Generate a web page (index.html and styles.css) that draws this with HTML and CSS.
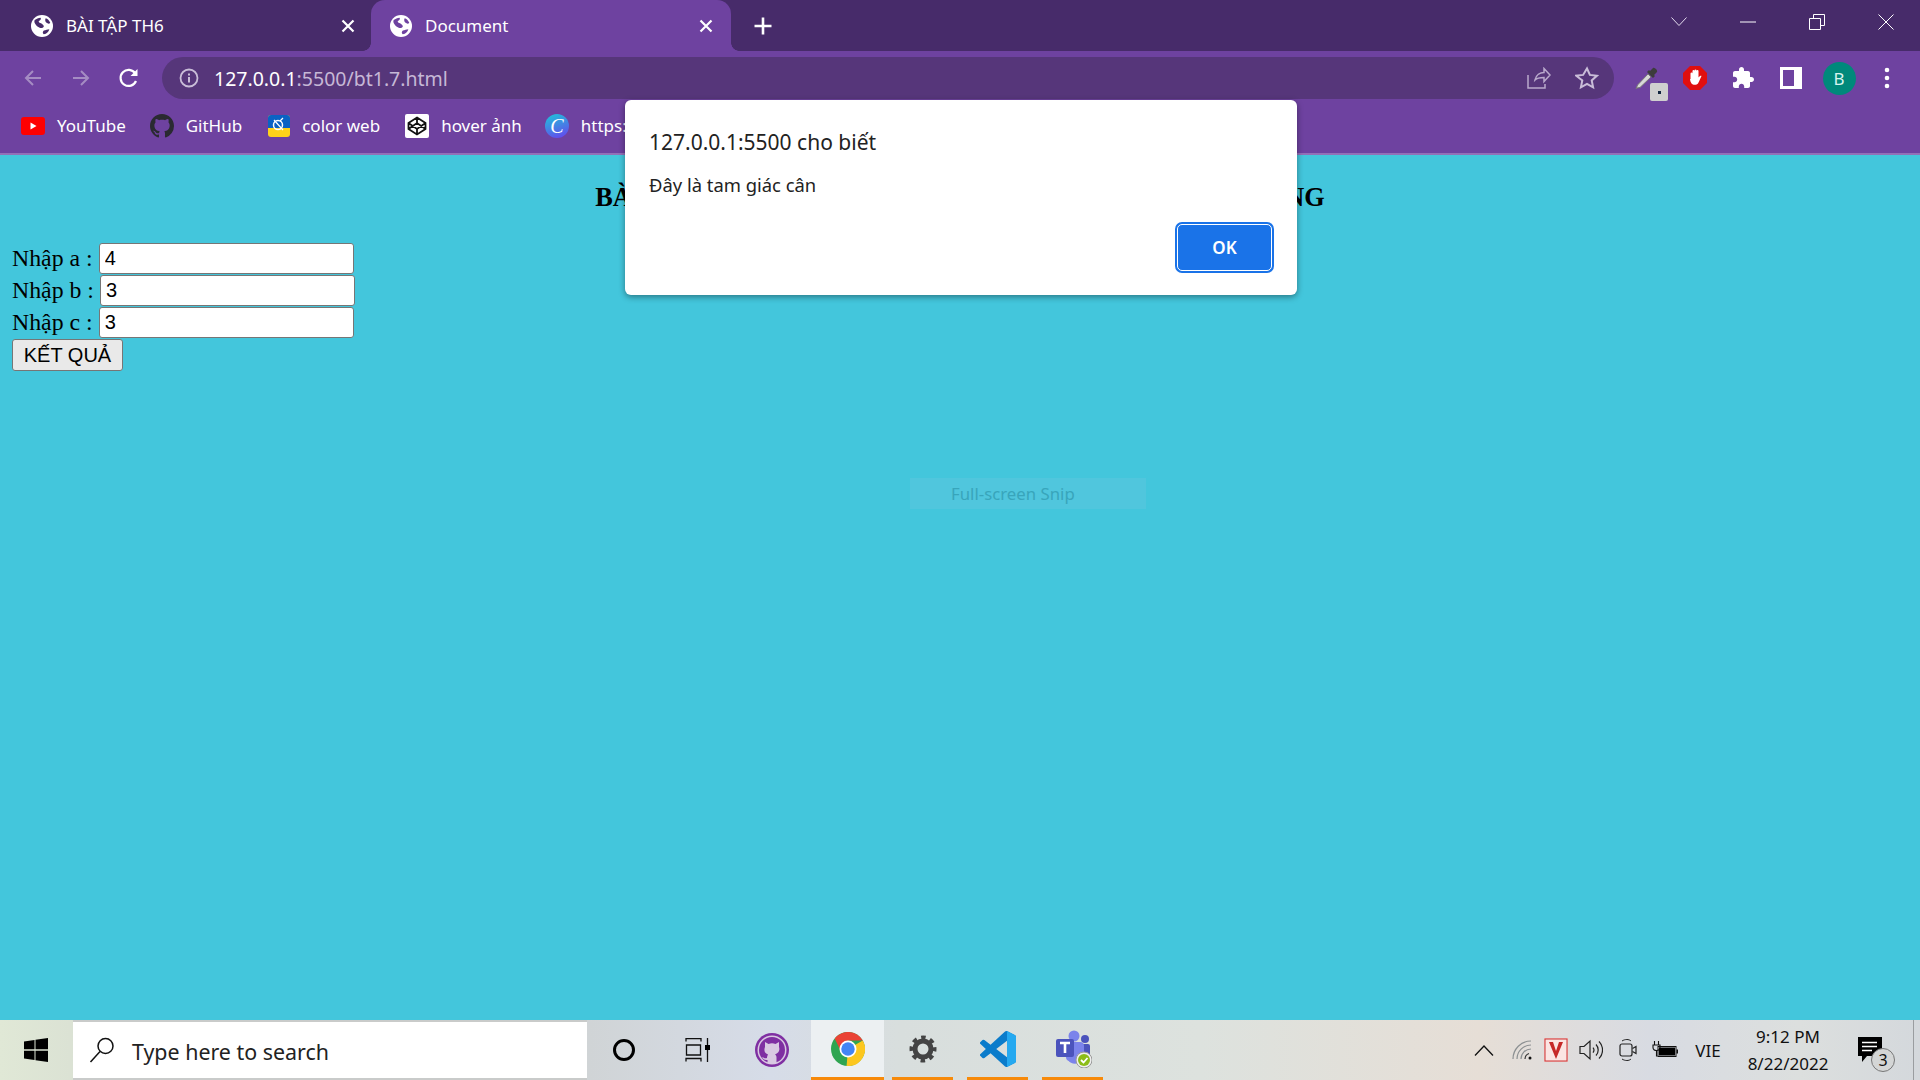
FILE: index.html
```html
<!DOCTYPE html>
<html lang="vi">
<head>
  <meta charset="UTF-8" />
  <meta name="viewport" content="width=device-width, initial-scale=1.0"/>
  <title>Document</title>
  <link rel="stylesheet" href="styles.css">
</head>
<body>
  <div class="tabstrip">
    <div class="tab">
      <svg class="globe" viewBox="0 0 24 24"><circle cx="12" cy="12" r="12" fill="#fff"/><path d="M4 5.500c2-1 4-2.500 6.500-2.500 1 1.500-.5 3-2 3.500-.5 1.500 1 2 2.500 2.500 1.500 1 3 2 3 3.500-1 2-3 2-4.500 1.500-2-1-4-2.500-5-4.500-1-1.500-1-2.500-.5-4zM16 3.500c2 .5 4 2.500 5 5-1 1.500-3 1-4 0-1.500-1-2-3.500-1-5zM14 17c2-.5 4-1.500 6-1.500-.5 2.500-3 5-6 5.500-1.500-.5-1.500-3 0-4z" fill="#472b6a"/></svg>
      <span class="tab-title">BÀI TẬP TH6</span>
      <svg class="tab-close" viewBox="0 0 24 24"><path d="M6.500 6.500l11 11M17.500 6.500l-11 11" stroke="#fff" stroke-width="2.200"/></svg>
    </div>
    <div class="tab active">
      <svg class="globe" viewBox="0 0 24 24"><circle cx="12" cy="12" r="12" fill="#fff"/><path d="M4 5.500c2-1 4-2.500 6.500-2.500 1 1.500-.5 3-2 3.500-.5 1.500 1 2 2.500 2.500 1.500 1 3 2 3 3.500-1 2-3 2-4.500 1.500-2-1-4-2.500-5-4.500-1-1.500-1-2.500-.5-4zM16 3.500c2 .5 4 2.500 5 5-1 1.500-3 1-4 0-1.500-1-2-3.500-1-5zM14 17c2-.5 4-1.500 6-1.500-.5 2.500-3 5-6 5.500-1.500-.5-1.500-3 0-4z" fill="#6e42a0"/></svg>
      <span class="tab-title">Document</span>
      <svg class="tab-close" viewBox="0 0 24 24"><path d="M6.500 6.500l11 11M17.500 6.500l-11 11" stroke="#fff" stroke-width="2.200"/></svg>
    </div>
    <svg class="new-tab" viewBox="0 0 24 24"><path d="M12 3.500v17M3.500 12h17" stroke="#fff" stroke-width="2.600"/></svg>
    <div class="window-btns">
      <span class="window-btn"><svg width="16" height="10" viewBox="0 0 16 10"><path d="M.5 .5l7.500 8 7.500-8" fill="none" stroke="#e4dcee"/></svg></span>
      <span class="window-btn"><svg width="16" height="2" viewBox="0 0 16 2"><path d="M0 1h16" stroke="#fff"/></svg></span>
      <span class="window-btn"><svg width="16" height="16" viewBox="0 0 16 16"><path d="M.5 4.500h11v11h-11zM4.500 4.500v-4h11v11h-4" fill="none" stroke="#fff"/></svg></span>
      <span class="window-btn"><svg width="16" height="16" viewBox="0 0 16 16"><path d="M.5 .5l15 15M15.500 .5l-15 15" stroke="#fff"/></svg></span>
    </div>
  </div>

  <div class="toolbar">
    <div class="nav-btns">
      <span class="tool-btn"><svg width="20" height="20" viewBox="0 0 20 20"><path d="M18 10H3M10 3l-7 7 7 7" fill="none" stroke="#a58cc3" stroke-width="2"/></svg></span>
      <span class="tool-btn"><svg width="20" height="20" viewBox="0 0 20 20"><path d="M2 10h15M10 3l7 7-7 7" fill="none" stroke="#a58cc3" stroke-width="2"/></svg></span>
      <span class="tool-btn"><svg width="22" height="22" viewBox="0 0 22 22"><path d="M18 14a8 8 0 1 1-.8-7.600" fill="none" stroke="#fff" stroke-width="2.200"/><path d="M19.500 2v7h-7z" fill="#fff"/></svg></span>
    </div>
    <div class="omnibox">
      <svg class="info-icon" viewBox="0 0 20 20"><circle cx="10" cy="10" r="8.500" fill="none" stroke="#c9bdd8" stroke-width="1.800"/><path d="M10 9v5.500M10 5.500v2" stroke="#c9bdd8" stroke-width="2"/></svg>
      <span class="url"><b>127.0.0.1</b>:5500/bt1.7.html</span>
      <div class="omni-actions">
        <span class="tool-btn"><svg width="24" height="22" viewBox="0 0 24 22"><path d="M8 13c1-5 5-7.500 9-7.500V1.500l6 6.500-6 6.500v-4c-4 0-7 .5-9 2.500z" fill="none" stroke="#b9a9cc" stroke-width="1.500"/><path d="M1 8v13h17v-4" fill="none" stroke="#b9a9cc" stroke-width="1.500"/></svg></span>
        <span class="tool-btn"><svg width="24" height="24" viewBox="0 0 24 24"><path d="M12 2.500l2.900 6.400 7 .8-5.200 4.700 1.400 6.900-6.100-3.500-6.100 3.500 1.400-6.900L1.100 9.700l7-.8z" fill="none" stroke="#c9bdd8" stroke-width="2"/></svg></span>
      </div>
    </div>
    <div class="ext-btns">
      <span class="tool-btn picker">
        <svg width="26" height="26" viewBox="0 0 26 26"><path d="M3 23l-1 1 1.500-4L14 9l3 3L6 22.500z" fill="#d8d8d8" stroke="#777"/><path d="M13 7l6 6 2-2-1-1 3-3c1-1.500-2.500-5-4-4l-3 3-1-1z" fill="#3c3c3c"/></svg>
        <span class="picker-swatch"><i></i></span>
      </span>
      <span class="tool-btn"><svg width="24" height="24" viewBox="0 0 24 24"><path d="M7 0h10l7 7v10l-7 7H7l-7-7V7z" fill="#e00f0f"/><path d="M7.500 13V7.500a1 1 0 0 1 2 0V5a1 1 0 0 1 2 0v-.5a1 1 0 0 1 2 0V5a1 1 0 0 1 2 0v6.500c1-1.500 2.500-2 3-1.500-1 2-2 5-3.500 7.500-1 1.500-5 2-6.500 0-1-1.500-1.500-3-1.500-4.500z" fill="#fff"/></svg></span>
      <span class="tool-btn"><svg width="24" height="24" viewBox="0 0 24 24"><path d="M20.500 11H19V7c0-1.100-.9-2-2-2h-4V3.500C13 2.120 11.880 1 10.500 1S8 2.120 8 3.500V5H4c-1.100 0-1.990.9-1.990 2v3.800H3.500c1.490 0 2.700 1.210 2.700 2.700s-1.210 2.700-2.700 2.700H2V20c0 1.100.9 2 2 2h3.800v-1.500c0-1.490 1.210-2.700 2.700-2.700 1.490 0 2.700 1.210 2.700 2.700V22H17c1.100 0 2-.9 2-2v-4h1.500c1.380 0 2.500-1.120 2.500-2.500S21.880 11 20.500 11z" fill="#fff"/></svg></span>
      <span class="tool-btn"><svg width="22" height="22" viewBox="0 0 22 22"><path d="M0 0h22v22H0z" fill="#fff"/><path d="M3 3h11v16H3z" fill="#6e42a0"/></svg></span>
      <span class="tool-btn"><span class="avatar">B</span></span>
      <span class="tool-btn"><svg width="6" height="22" viewBox="0 0 6 22"><circle cx="3" cy="3" r="2.300" fill="#fff"/><circle cx="3" cy="11" r="2.300" fill="#fff"/><circle cx="3" cy="19" r="2.300" fill="#fff"/></svg></span>
    </div>
  </div>

  <div class="bookmarks">
    <span class="bookmark">
      <svg width="24" height="18" viewBox="0 0 24 18"><rect width="24" height="18" rx="3" fill="#f00"/><path d="M9.500 5.500l6 3.500-6 3.500z" fill="#fff"/></svg>
      <span class="bm-text">YouTube</span>
    </span>
    <span class="bookmark">
      <svg width="24" height="24" viewBox="0 0 16 16"><path d="M8 0C3.580 0 0 3.580 0 8c0 3.540 2.290 6.530 5.470 7.590.4.070.55-.17.55-.38 0-.19-.01-.82-.01-1.490-2.010.37-2.530-.49-2.690-.94-.09-.23-.48-.94-.82-1.130-.28-.15-.68-.52-.01-.53.63-.01 1.080.58 1.230.82.72 1.210 1.870.87 2.330.66.070-.52.280-.87.510-1.070-1.780-.2-3.640-.89-3.640-3.950 0-.87.31-1.590.82-2.150-.08-.2-.36-1.020.08-2.120 0 0 .67-.21 2.200.82.64-.18 1.320-.27 2-.27.68 0 1.360.09 2 .27 1.530-1.040 2.200-.82 2.200-.82.44 1.100.16 1.920.08 2.120.51.56.82 1.270.82 2.150 0 3.070-1.870 3.750-3.650 3.950.29.25.54.73.54 1.480 0 1.070-.01 1.930-.01 2.200 0 .21.15.46.55.38A8.013 8.013 0 0016 8c0-4.420-3.580-8-8-8z" fill="#2a2a31"/></svg>
      <span class="bm-text">GitHub</span>
    </span>
    <span class="bookmark">
      <svg width="22" height="22" viewBox="0 0 22 22"><rect width="22" height="22" rx="3" fill="#ffd21a"/><path d="M0 3a3 3 0 0 1 3-3h16a3 3 0 0 1 3 3v10H0z" fill="#0a62c4"/><circle cx="10" cy="10" r="4.500" fill="none" stroke="#fff" stroke-width="1.500"/><path d="M6 5l9 10M15 3l-3 3" stroke="#fff" stroke-width="1.200"/></svg>
      <span class="bm-text">color web</span>
    </span>
    <span class="bookmark">
      <svg width="24" height="24" viewBox="0 0 24 24"><rect width="24" height="24" rx="2" fill="#fff"/><path d="M12 3.500l8.500 5.500v6L12 20.500 3.500 15V9zM3.500 9l8.500 6 8.500-6M3.500 15L12 9l8.500 6M12 3.500V9M12 15v5.500" fill="none" stroke="#111" stroke-width="1.800"/></svg>
      <span class="bm-text">hover ảnh</span>
    </span>
    <span class="bookmark">
      <span class="canva-icon">C</span>
      <span class="bm-text">https:</span>
    </span>
  </div>

  <main class="page">
    <div class="page-title">BÀI TẬP 7: KIỂM TRA LOẠI TAM GIÁC CÂN, ĐỀU, VUÔNG</div>
    <form class="triangle-form">
      <label class="field">Nhập a : <input type="text" value="4"></label>
      <label class="field">Nhập b : <input type="text" value="3"></label>
      <label class="field">Nhập c : <input type="text" value="3"></label>
      <button type="button" class="result-btn">KẾT QUẢ</button>
    </form>
  </main>

  <div class="taskbar">
    <span class="start"><svg width="24" height="24" viewBox="0 0 24 24"><path d="M0 3.500l10.500-1.500v9.300H0zM11.500 1.800L24 0v11.300H11.500zM0 12.700h10.500V22L0 20.500zM11.500 12.700H24V24l-12.500-1.800z" fill="#000"/></svg></span>
    <div class="search">
      <svg width="26" height="26" viewBox="0 0 26 26"><circle cx="16.500" cy="9" r="7.500" fill="none" stroke="#111" stroke-width="1.500"/><path d="M11 14.500L1.500 25" stroke="#111" stroke-width="1.500"/></svg>
      <span class="search-text">Type here to search</span>
    </div>
    <span class="task-tool"><svg width="24" height="24" viewBox="0 0 24 24"><circle cx="12" cy="12" r="9.500" fill="none" stroke="#000" stroke-width="3"/></svg></span>
    <span class="task-tool"><svg width="26" height="24" viewBox="0 0 26 24"><path d="M1 3.500V.5h15v3M1 23.500v-3h15v3M1.500 7h14v10h-14zM22.500 0v24" fill="none" stroke="#111" stroke-width="1.300"/><rect x="20" y="7" width="5" height="5" fill="#000"/></svg></span>
    <span class="task-tool"><svg width="34" height="34" viewBox="0 0 34 34"><circle cx="17" cy="17" r="17" fill="#7f2fa2"/><circle cx="17" cy="17" r="14.500" fill="#d9c9e2"/><circle cx="17" cy="17" r="13" fill="#7f2fa2"/><path d="M10 9l3.500 2a10 10 0 0 1 7 0L24 9v5c1 3 0 6-4 7.500 1 .5 1.500 1.500 1.500 3V30h-9v-3c-3 .5-4.500-1-5.500-3 1.500.5 3 2 5 1 0-1 0-1.500 1-3.500-4-1.500-4-5-3-7.500z" fill="#d9c9e2"/></svg></span>
    <span class="task-app chrome"><svg width="34" height="34" viewBox="0 0 48 48"><circle cx="24" cy="24" r="24" fill="#2fa551"/><path d="M24 24L44.800 12A24 24 0 0 1 22 48z" fill="#fcc71f"/><path d="M14 27l-8.800-18A24 24 0 0 1 44.800 12H24z" fill="#ea4335"/><circle cx="24" cy="24" r="12" fill="#fff"/><circle cx="24" cy="24" r="9.500" fill="#4285f4"/></svg></span>
    <span class="task-app"><svg width="28" height="28" viewBox="0 0 28 28"><circle cx="14" cy="14" r="8" fill="none" stroke="#444" stroke-width="5"/><circle cx="14" cy="14" r="11.500" fill="none" stroke="#444" stroke-width="4" stroke-dasharray="4.500 4.530" stroke-dashoffset="2.200"/></svg></span>
    <span class="task-app"><svg width="36" height="36" viewBox="0 0 24 24"><path d="M23.150 2.587L18.210.21a1.494 1.494 0 0 0-1.705.29l-9.460 8.630-4.120-3.128a.999.999 0 0 0-1.276.057L.327 7.261A1 1 0 0 0 .326 8.740L3.899 12 .326 15.260a1 1 0 0 0 .001 1.479L1.650 17.940a.999.999 0 0 0 1.276.057l4.120-3.128 9.460 8.630a1.492 1.492 0 0 0 1.704.29l4.942-2.377A1.500 1.500 0 0 0 24 20.060V3.939a1.500 1.500 0 0 0-.85-1.352zm-5.146 14.861L10.826 12l7.178-5.448v10.896z" fill="#0b7ccb"/><path d="M18 .06l5.150 2.527A1.500 1.500 0 0 1 24 3.939v16.120a1.500 1.500 0 0 1-.85 1.352L18 23.940z" fill="#25a9f0"/></svg></span>
    <span class="task-app"><svg width="38" height="38" viewBox="0 0 38 38"><circle cx="20" cy="6" r="5.500" fill="#7b83eb"/><circle cx="31" cy="9" r="4" fill="#4b53bc"/><rect x="26" y="14" width="10" height="13" rx="2" fill="#4b53bc"/><rect x="12" y="12" width="18" height="19" rx="4" fill="#7b83eb"/><path d="M14 30c3 5 11 5 14 0z" fill="#7b83eb"/><rect x="2" y="9" width="18" height="18" rx="2" fill="#4b53bc"/><path d="M6 13h10M11 13v10" stroke="#fff" stroke-width="2.600"/><circle cx="30" cy="30" r="8" fill="#eee" stroke="#999"/><circle cx="30" cy="30" r="6" fill="#8cbd18"/><path d="M27 30l2.500 2.500 4-4.500" fill="none" stroke="#fff" stroke-width="1.800"/></svg></span>
    <div class="tray">
      <span class="tray-item"><svg width="20" height="11" viewBox="0 0 20 11"><path d="M1 10.500l9-9.500 9 9.500" fill="none" stroke="#111" stroke-width="1.300"/></svg></span>
      <span class="tray-item"><svg width="20" height="20" viewBox="0 0 20 20"><path d="M1 19A18 18 0 0 1 19 1M5 19A14 14 0 0 1 19 5M9 19A10 10 0 0 1 19 9" fill="none" stroke="#8b8f91" stroke-width="1.200"/><path d="M13 19a6 6 0 0 1 4-5.500" fill="none" stroke="#333" stroke-width="1.200"/><circle cx="18" cy="18" r="1.500" fill="#111"/></svg></span>
      <span class="tray-item"><svg width="24" height="24" viewBox="0 0 24 24"><rect width="24" height="24" fill="#f3c7c4"/><rect x="1" y="1" width="22" height="22" fill="#fbe5e3" stroke="#c33" stroke-width="1"/><path d="M5 4l7 17 7-17h-4l-3 9-3-9z" fill="#c62828"/></svg></span>
      <span class="tray-item"><svg width="24" height="22" viewBox="0 0 24 22"><path d="M1 7.500h4l6-5.500v18l-6-5.500H1z" fill="none" stroke="#222" stroke-width="1.200"/><path d="M14 8.500a4 4 0 0 1 0 5M17 5.500a8 8 0 0 1 0 11M20 2.500a12 12 0 0 1 0 17" fill="none" stroke="#222" stroke-width="1.200"/></svg></span>
      <span class="tray-item"><svg width="18" height="24" viewBox="0 0 18 24"><path d="M3 3c3-2 7-2 9 0M3 21c3 2 7 2 9 0" fill="none" stroke="#222"/><rect x="1" y="6" width="12" height="12" rx="2" fill="none" stroke="#222" stroke-width="1.200"/><path d="M13.500 10.500l3.500-2v7l-3.500-2" fill="none" stroke="#222" stroke-width="1.200"/></svg></span>
      <span class="tray-item"><svg width="26" height="18" viewBox="0 0 26 18"><path d="M2.500 0v4M6.500 0v4M1 4h7v2.500c0 2-1.500 3-3.500 3S1 8.500 1 6.500zM4.500 9.500v5.500h1" fill="none" stroke="#111" stroke-width="1.100"/><rect x="6" y="5.500" width="18" height="10" fill="none" stroke="#111"/><rect x="7" y="6.500" width="16" height="8" fill="#000"/><rect x="24.500" y="8.500" width="1.500" height="4" fill="#111"/></svg></span>
      <span class="tray-item tray-lang">VIE</span>
      <span class="clock"><span>9:12 PM</span><span>8/22/2022</span></span>
      <span class="tray-item notify">
        <svg width="24" height="26" viewBox="0 0 24 26"><path d="M0 0h24v19H9l-5 6v-6H0z" fill="#000"/><path d="M4 5.500h15M4 9.500h15M4 13.500h10" stroke="#fff" stroke-width="1.300"/></svg>
        <span class="notify-badge">3</span>
      </span>
      <span class="show-desktop"></span>
    </div>
  </div>

  <!-- alert dialog sits over the browser window -->
  <div class="alert-box">
    <div class="alert-title">127.0.0.1:5500 cho biết</div>
    <div class="alert-msg">Đây là tam giác cân</div>
    <div class="alert-actions"><button type="button" class="alert-ok">OK</button></div>
  </div>

  <!-- fading snip toast over the page -->
  <div class="snip-toast">Full-screen Snip</div>
</body>
</html>
```

FILE: styles.css
```css
* {
  box-sizing: border-box;
}

html, body {
  height: 100%;
}

body {
  margin: 0;
  display: flex;
  flex-direction: column;
  overflow: hidden;
  background: #43c6dc;
  font-family: "Noto Sans", sans-serif;
  color: #fff;
}

svg {
  display: block;
  flex: none;
}

/* tab strip */
.tabstrip {
  height: 51px;
  flex: none;
  display: flex;
  align-items: stretch;
  background: #472b6a;
}

.tab {
  width: 371px;
  display: flex;
  align-items: center;
  padding: 0 11px 0 29px;
  font-size: 17px;
}

.tab.active {
  position: relative;
  width: 360px;
  padding: 0 13px 0 17px;
  background: #6e42a0;
  border-radius: 14px 14px 0 0;
}

/* little flares at the foot of the active tab */
.tab.active::before,
.tab.active::after {
  content: "";
  position: absolute;
  bottom: 0;
  width: 8px;
  height: 8px;
}

.tab.active::before {
  left: -8px;
  background: radial-gradient(circle at 0 0, #472b6a 7.500px, #6e42a0 8px);
}

.tab.active::after {
  right: -8px;
  background: radial-gradient(circle at 100% 0, #472b6a 7.500px, #6e42a0 8px);
}

.globe {
  width: 22px;
  height: 22px;
  margin: 0 13px 0 2px;
}

.tab-title {
  flex: 1;
}

.tab-close {
  width: 24px;
  height: 24px;
}

.new-tab {
  width: 24px;
  height: 24px;
  margin: 14px 0 0 20px;
}

.window-btns {
  margin-left: auto;
  display: flex;
}

.window-btn {
  width: 69px;
  display: flex;
  align-items: center;
  justify-content: center;
  padding-bottom: 8px;
}

/* toolbar */
.toolbar {
  height: 54px;
  flex: none;
  display: flex;
  align-items: flex-start;
  padding: 6px 9px 0 9px;
  background: #6e42a0;
}

.nav-btns,
.ext-btns,
.omni-actions {
  display: flex;
}

.tool-btn {
  position: relative;
  width: 48px;
  height: 42px;
  display: flex;
  align-items: center;
  justify-content: center;
}

.omnibox {
  flex: 1;
  height: 42px;
  margin: 0 9px;
  display: flex;
  align-items: center;
  padding: 0 3px 0 17px;
  background: #56367a;
  border-radius: 21px;
}

.info-icon {
  width: 20px;
  height: 20px;
  margin-right: 15px;
}

.url {
  margin-top: 1px;
  font-size: 19.500px;
  color: #c6b8d6;
}

.url b {
  font-weight: 400;
  color: #fff;
}

.omni-actions {
  margin-left: auto;
}

.picker-swatch {
  position: absolute;
  left: 27px;
  top: 26px;
  width: 18px;
  height: 18px;
  border-radius: 2px;
  background: #cfcfcf;
  display: flex;
  align-items: center;
  justify-content: center;
}

.picker-swatch i {
  width: 3px;
  height: 3px;
  background: #10243f;
}

.avatar {
  width: 33px;
  height: 33px;
  border-radius: 50%;
  background: #00897b;
  display: flex;
  align-items: center;
  justify-content: center;
  font-size: 17px;
  color: #d8f3ee;
}

/* bookmarks */
.bookmarks {
  height: 50px;
  flex: none;
  display: flex;
  align-items: flex-start;
  gap: 25px;
  padding: 9px 0 0 21px;
  background: #6e42a0;
  border-bottom: 2px solid #9270b8;
  font-size: 17px;
  white-space: nowrap;
  overflow: hidden;
}

.bookmark {
  height: 24px;
  display: flex;
  align-items: center;
  gap: 12px;
}

.bookmark:first-child {
  margin-right: -1px;
}

.bookmark:nth-child(2) {
  margin-right: 1px;
}

.bookmark:last-child {
  margin-left: -2px;
}

.bm-text {
  margin-top: -2px;
}

.canva-icon {
  width: 24px;
  height: 24px;
  border-radius: 50%;
  background: linear-gradient(160deg, #1cc8d8, #6a3ff0);
  display: flex;
  align-items: center;
  justify-content: center;
  font: italic 20px "Liberation Serif", serif;
}

/* page content */
.page {
  flex: 1;
  padding: 0 12px;
  color: #000;
  font-family: "Liberation Serif", serif;
}

.page-title {
  margin: 28px 0 30px;
  font-size: 26.300px;
  font-weight: bold;
  line-height: 30px;
  text-align: center;
  white-space: nowrap;
}

.triangle-form {
  font-size: 23.800px;
}

.field {
  height: 32px;
  display: flex;
  align-items: flex-start;
  gap: 6px;
  line-height: 31px;
}

.field input {
  width: 255px;
  height: 31px;
  padding: 0 5px;
  border: 1px solid #767676;
  border-radius: 3px;
  background: #fff;
  font: 20px "Liberation Sans", sans-serif;
  color: #000;
}

.result-btn {
  display: block;
  width: 111px;
  height: 32px;
  padding: 0;
  border: 1px solid #767676;
  border-radius: 3px;
  background: #e9e9e9;
  font: 20px "Liberation Sans", sans-serif;
  color: #000;
}

/* taskbar */
.taskbar {
  height: 60px;
  flex: none;
  display: flex;
  align-items: stretch;
  color: #111;
  background: linear-gradient(90deg, #e0e8d6 0, #dbe2d4 70px, #d0d4d6 590px, #d6dce8 770px, #d8dedd 900px, #dde2de 1200px, #e6ded6 1480px, #d8dbe2 1650px, #dcdfde 1800px, #d4d8dc 1920px);
}

.start {
  width: 73px;
  padding-right: 1px;
  display: flex;
  align-items: center;
  justify-content: center;
}

.search {
  width: 514px;
  display: flex;
  align-items: center;
  gap: 17px;
  padding-left: 16px;
  background: #fff;
  border: 2px solid #c9cbca;
  border-width: 2px 0;
  font-size: 21.400px;
  color: #222;
}

.search-text {
  margin-top: 3px;
}

.task-tool {
  width: 74px;
  display: flex;
  align-items: center;
  justify-content: center;
}

.task-app {
  width: 61px;
  margin: 0 7px;
  display: flex;
  align-items: center;
  justify-content: center;
  border-bottom: 3px solid #f78a0a;
}

.task-app.chrome {
  width: 73px;
  margin: 0 1px 0 2px;
  background: #ecf0f2;
}

.tray {
  margin-left: auto;
  display: grid;
  grid-template-columns: 38px 37px 32px 38px 36px 38px 48px 112px 52px 24px;
  align-items: center;
}

.tray-item {
  position: relative;
  display: flex;
  justify-content: center;
  align-items: center;
}

.tray-lang {
  font-size: 17px;
}

.clock {
  display: flex;
  flex-direction: column;
  align-items: center;
  gap: 4px;
  font-size: 17px;
  line-height: 23px;
}

.notify-badge {
  position: absolute;
  left: 27px;
  top: 11px;
  width: 24px;
  height: 24px;
  border-radius: 50%;
  background: #d4d6d6;
  border: 1px solid #777;
  display: flex;
  align-items: center;
  justify-content: center;
  font-size: 16px;
}

.show-desktop {
  height: 60px;
  margin-left: 17px;
  border-left: 1px solid #9a9da0;
}

/* alert dialog */
.alert-box {
  position: absolute;
  left: 625px;
  top: 100px;
  width: 672px;
  height: 195px;
  padding: 27px 25px 0 24px;
  background: #fff;
  border-radius: 6px;
  box-shadow: 0 2px 6px rgba(0, 0, 0, 0.4);
  color: #222;
}

.alert-title {
  font-size: 21px;
  line-height: 30px;
}

.alert-msg {
  margin-top: 14px;
  font-size: 18.400px;
  line-height: 28px;
}

.alert-actions {
  display: flex;
  justify-content: flex-end;
  margin-top: 25px;
}

.alert-ok {
  width: 95px;
  height: 47px;
  border: 1px solid #fff;
  border-radius: 5px;
  background: #1a73e8;
  box-shadow: 0 0 0 2px #1a73e8;
  font: 600 17px "Noto Sans", sans-serif;
  color: #fff;
}

.snip-toast {
  position: absolute;
  left: 910px;
  top: 478px;
  width: 236px;
  height: 31px;
  padding-left: 41px;
  background: #50c6dd;
  color: #38a5bb;
  font-size: 16.800px;
  line-height: 31px;
}
```
